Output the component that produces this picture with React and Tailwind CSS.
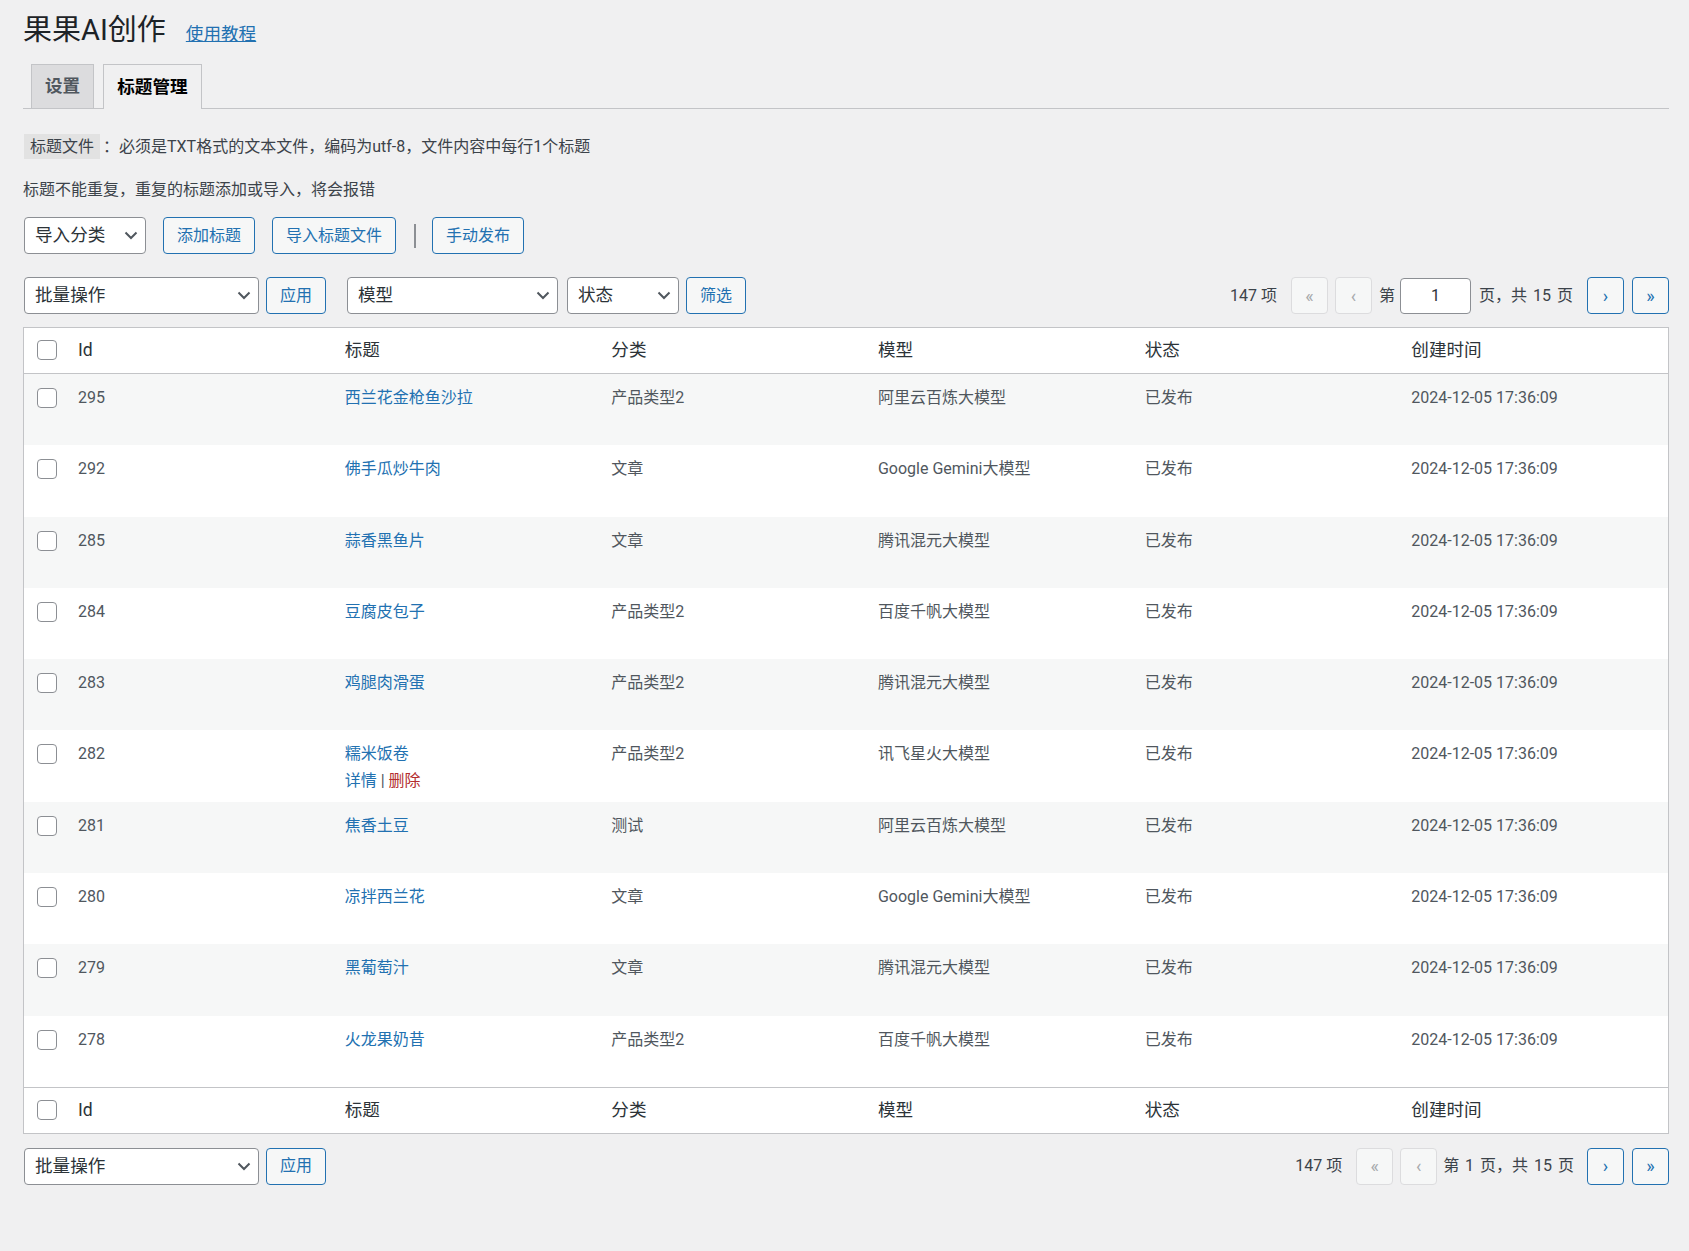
import React from 'react';

const FONT = "font-['Roboto','Noto_Sans_CJK_SC',sans-serif]";

const rows = [
  { id: 295, title: '西兰花金枪鱼沙拉', cat: '产品类型2', model: '阿里云百炼大模型' },
  { id: 292, title: '佛手瓜炒牛肉', cat: '文章', model: 'Google Gemini大模型' },
  { id: 285, title: '蒜香黑鱼片', cat: '文章', model: '腾讯混元大模型' },
  { id: 284, title: '豆腐皮包子', cat: '产品类型2', model: '百度千帆大模型' },
  { id: 283, title: '鸡腿肉滑蛋', cat: '产品类型2', model: '腾讯混元大模型' },
  { id: 282, title: '糯米饭卷', cat: '产品类型2', model: '讯飞星火大模型', actions: true },
  { id: 281, title: '焦香土豆', cat: '测试', model: '阿里云百炼大模型' },
  { id: 280, title: '凉拌西兰花', cat: '文章', model: 'Google Gemini大模型' },
  { id: 279, title: '黑葡萄汁', cat: '文章', model: '腾讯混元大模型' },
  { id: 278, title: '火龙果奶昔', cat: '产品类型2', model: '百度千帆大模型' },
];

const Select = ({ label, className }) => (
  <div className={`relative ${className}`}>
    <select className="block h-[37px] w-full appearance-none rounded border border-[#8c8f94] bg-white pl-[10px] pr-6 text-[17.6px] leading-[35px] text-[#2c3338]">
      <option>{label}</option>
    </select>
    <svg className="pointer-events-none absolute right-[8px] top-[11px] h-[14px] w-[14px]" viewBox="0 0 14 14" fill="none" stroke="#50575e" strokeWidth="2">
      <path d="M1.5 4.5 7 10l5.5-5.5" />
    </svg>
  </div>
);

const Button = ({ children, className = '' }) => (
  <button className={`h-[37px] rounded border border-[#2271b1] bg-[#f6f7f7] text-base text-[#2271b1] ${className}`}>
    {children}
  </button>
);

const PageBtn = ({ children, disabled }) => (
  <span
    className={`flex h-[37px] w-[37px] items-center justify-center rounded border bg-[#f6f7f7] text-lg ${
      disabled ? 'border-[#dcdcde] text-[#a7aaad]' : 'border-[#2271b1] text-[#2271b1]'
    }`}
  >
    {children}
  </span>
);

const Check = () => (
  <input type="checkbox" className="block h-5 w-5 appearance-none rounded border border-[#8c8f94] bg-white" />
);

const HeadRow = ({ foot }) => (
  <tr className="h-[45px] text-left align-top text-[17.6px] font-normal leading-[29px] text-[#2c3338]">
    <td className={`border-[#c3c4c7] pl-[13px] pt-3 ${foot ? 'border-t' : 'border-b'}`}><Check /></td>
    {['Id', '标题', '分类', '模型', '状态', '创建时间'].map((h) => (
      <th key={h} className={`border-[#c3c4c7] px-[10px] py-2 font-normal ${foot ? 'border-t' : 'border-b'}`}>{h}</th>
    ))}
  </tr>
);

const App = () => {
  return (
    <div className={`min-h-[1251px] bg-[#f0f0f1] pl-[23px] pr-5 text-base text-[#3c434a] ${FONT}`}>
      <div className="flex h-[60px] items-center">
        <h1 className="text-[29px] font-normal leading-[60px] text-[#1d2327]">果果AI创作</h1>
        <a href="#" className="ml-5 mt-2 text-[17.6px] text-[#2271b1] underline">使用教程</a>
      </div>

      <div className="mt-1 flex h-[45px] gap-[9px] border-b border-[#c3c4c7] pl-2">
        <div className="flex h-[45px] items-center border border-[#c3c4c7] bg-[#dcdcde] px-[13px] text-[17.6px] font-bold text-[#50575e]">设置</div>
        <div className="z-10 flex h-[45px] items-center border border-b-0 border-[#c3c4c7] bg-[#f0f0f1] px-[13px] text-[17.6px] font-bold text-black">标题管理</div>
      </div>

      <p className="mt-[25px] flex h-[25px] items-center pl-px leading-[25px]">
        <span className="bg-[#e2e2e2] px-[6px]">标题文件</span>
        <span className="ml-[3px]">：必须是TXT格式的文本文件，编码为utf-8，文件内容中每行1个标题</span>
      </p>
      <p className="mt-[18px] leading-[25px]">标题不能重复，重复的标题添加或导入，将会报错</p>

      <div className="mt-[15px] flex h-[37px] items-center pl-px">
        <Select label="导入分类" className="w-[122px]" />
        <Button className="ml-[17px] w-[92px]">添加标题</Button>
        <Button className="ml-[17px] w-[124px]">导入标题文件</Button>
        <div className="ml-[18px] h-6 w-0.5 bg-[#8c8f94]" />
        <Button className="ml-4 w-[92px]">手动发布</Button>
      </div>

      <div className="mt-[23px] flex h-[37px] items-center pl-px">
        <Select label="批量操作" className="w-[235px]" />
        <Button className="ml-[7px] w-[60px]">应用</Button>
        <Select label="模型" className="ml-[21px] w-[211px]" />
        <Select label="状态" className="ml-[9px] w-[112px]" />
        <Button className="ml-[7px] w-[60px]">筛选</Button>
        <div className="ml-auto flex items-center">
          <span className="mr-[14px]">147 项</span>
          <PageBtn disabled>«</PageBtn>
          <span className="ml-[7px]"><PageBtn disabled>‹</PageBtn></span>
          <span className="ml-[7px]">第</span>
          <input readOnly value="1" className="ml-[5px] h-[36px] w-[71px] rounded border border-[#8c8f94] bg-white text-center text-[#2c3338]" />
          <span className="ml-2 mr-[14px] [word-spacing:2px]">页，共 15 页</span>
          <PageBtn>›</PageBtn>
          <span className="ml-2"><PageBtn>»</PageBtn></span>
        </div>
      </div>

      <table className="mt-[13px] w-full table-fixed border-separate border-spacing-0 border border-[#c3c4c7] bg-white">
        <colgroup>
          <col className="w-[44px]" />
        </colgroup>
        <thead><HeadRow /></thead>
        <tbody>
          {rows.map((r, i) => (
            <tr key={r.id} className={`h-[71.3px] align-top leading-8 text-[#50575e] ${i % 2 === 0 ? 'bg-[#f6f7f7]' : 'bg-white'}`}>
              <td className="pl-[13px] pt-[14px]"><Check /></td>
              <td className="px-[10px] pt-2">{r.id}</td>
              <td className="px-[10px] pt-2">
                <a href="#" className="text-[#2271b1]">{r.title}</a>
                {r.actions && (
                  <div className="leading-[22px] text-[#2271b1]">
                    详情 <span className="text-[#50575e]">|</span> <span className="text-[#b32d2e]">删除</span>
                  </div>
                )}
              </td>
              <td className="px-[10px] pt-2">{r.cat}</td>
              <td className="px-[10px] pt-2">{r.model}</td>
              <td className="px-[10px] pt-2">已发布</td>
              <td className="px-[10px] pt-2">2024-12-05 17:36:09</td>
            </tr>
          ))}
        </tbody>
        <tfoot><HeadRow foot /></tfoot>
      </table>

      <div className="mt-[14px] flex h-[37px] items-center pl-px">
        <Select label="批量操作" className="w-[235px]" />
        <Button className="ml-[7px] w-[60px]">应用</Button>
        <div className="ml-auto flex items-center">
          <span className="mr-[14px]">147 项</span>
          <PageBtn disabled>«</PageBtn>
          <span className="ml-[7px]"><PageBtn disabled>‹</PageBtn></span>
          <span className="ml-[6px] mr-[13px] [word-spacing:2px]">第 1 页，共 15 页</span>
          <PageBtn>›</PageBtn>
          <span className="ml-2"><PageBtn>»</PageBtn></span>
        </div>
      </div>
    </div>
  );
};

export default App;
